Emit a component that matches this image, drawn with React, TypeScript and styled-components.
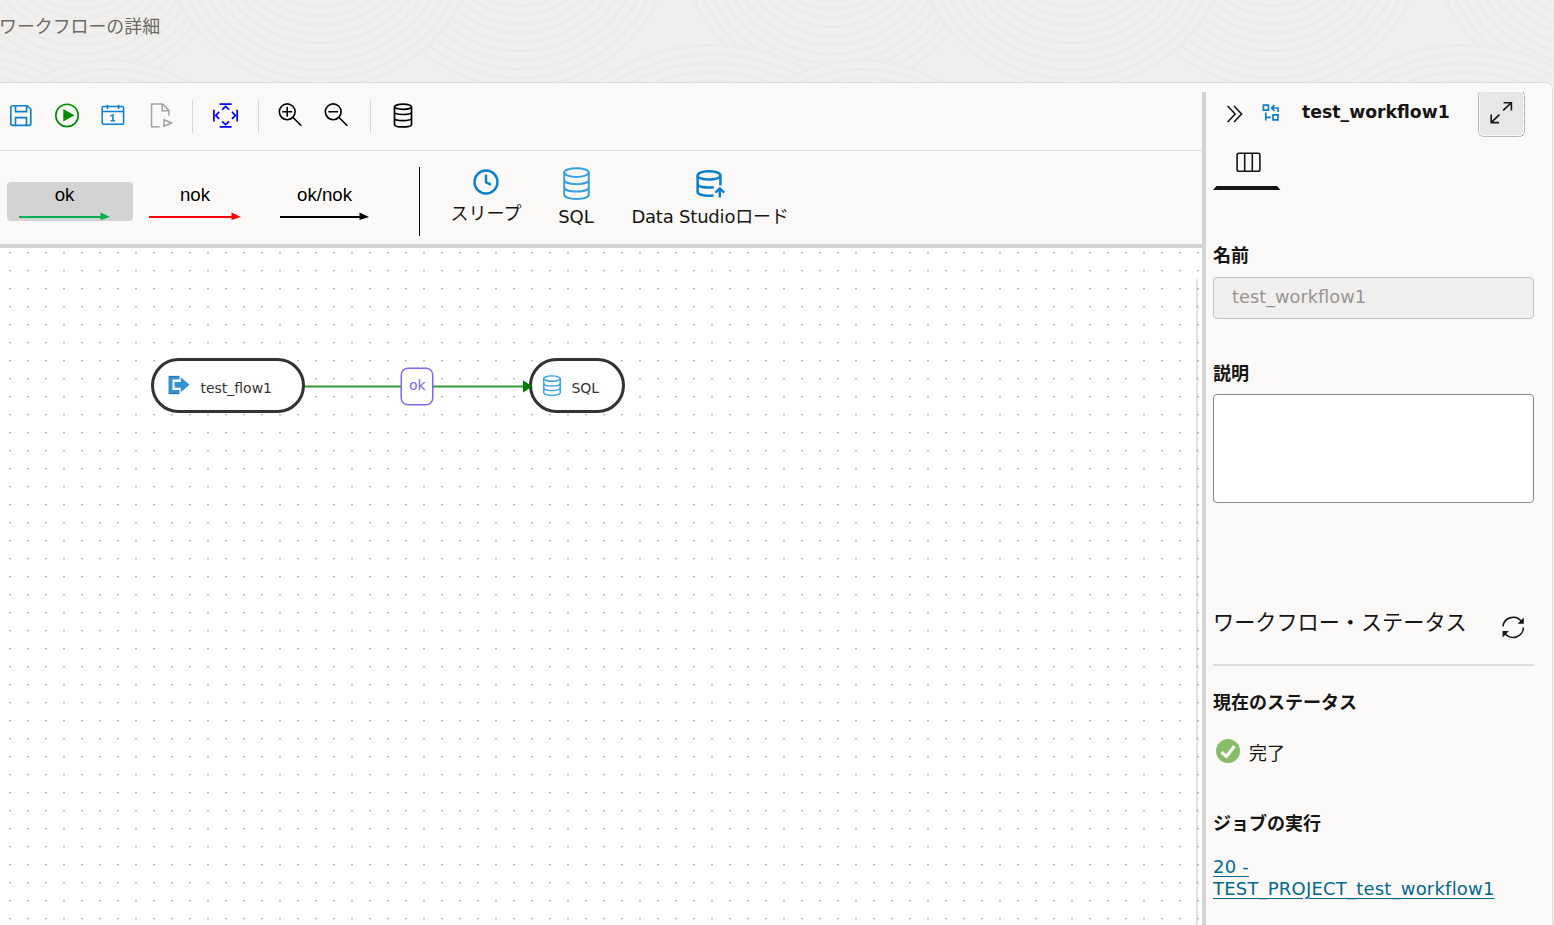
import React from 'react';
import styled, { createGlobalStyle } from 'styled-components';

const LATIN = `'DejaVu Sans', 'Noto Sans CJK JP', sans-serif`;

const GlobalStyle = createGlobalStyle`
  * { box-sizing: border-box; }
  body {
    margin: 0;
    background: #f0efed;
    color: #161513;
    font-family: 'Noto Sans', 'Noto Sans CJK JP', sans-serif;
    font-size: 18px;
    overflow: hidden;
  }
  svg { display: block; flex: none; }
`;

const Page = styled.div`
  display: flex;
  flex-direction: column;
  width: 1554px;
  height: 925px;
  overflow: hidden;
`;

const Header = styled.header`
  display: grid;
  height: 82px;
  flex: none;
  overflow: hidden;
  & > * { grid-area: 1 / 1; }
`;

const PageTitle = styled.h1`
  margin: 12px 0 0 -1px;
  font-size: 17.9px;
  font-weight: 400;
  line-height: 28px;
  color: #6b6865;
`;

const Card = styled.main`
  display: flex;
  flex: 1;
  width: 1553px;
  min-height: 0;
  background: #fbf9f8;
  border: solid #dedddb;
  border-width: 1px 1px 0 0;
  border-top-right-radius: 7px;
`;

const Editor = styled.section`
  display: flex;
  flex-direction: column;
  width: 1202px;
`;

const Toolbar = styled.div`
  display: flex;
  align-items: flex-start;
  height: 68px;
  padding-top: 20px;
  border-bottom: 1px solid #dddcda;
`;

const ToolButton = styled.button<{ $before: number; $color: string }>`
  flex: none;
  padding: 0;
  border: 0;
  background: none;
  margin-left: ${p => p.$before}px;
  color: ${p => p.$color};
`;

const Separator = styled.span<{ $before: number }>`
  width: 1px;
  height: 33px;
  margin: -3px 0 0 ${p => p.$before}px;
  background: #d9d8d6;
`;

const Palette = styled.div`
  display: flex;
  align-items: flex-start;
  height: 97px;
  border-bottom: 4px solid #d3d3d3;
`;

const LinkTypes = styled.div`
  display: flex;
  gap: 4px;
  padding: 31px 0 0 7px;
  width: 419px;
`;

const LinkType = styled.button<{ $active?: boolean; $pad: number; $w: number }>`
  display: flex;
  flex-direction: column;
  width: 126px;
  height: 39px;
  padding: 2px 0 0 ${p => p.$pad}px;
  border: 0;
  border-radius: 4px;
  background: ${p => (p.$active ? '#d3d3d3' : 'transparent')};
  color: #000;
  font: 18.67px/22px 'Liberation Sans', sans-serif;
  & > span { width: ${p => p.$w}px; text-align: center; }
  & > svg { margin-top: 6px; }
`;

const PaletteRule = styled.span`
  width: 1px;
  height: 69px;
  margin-top: 16px;
  background: #000;
`;

const Tasks = styled.div`
  display: flex;
  padding-left: 29px;
`;

const Task = styled.button<{ $w: number; $before?: number; $top: number; $gap: number; $spacing?: number }>`
  display: flex;
  flex-direction: column;
  align-items: center;
  width: ${p => p.$w}px;
  margin-left: ${p => p.$before ?? 0}px;
  padding: ${p => p.$top}px 0 0;
  gap: ${p => p.$gap}px;
  border: 0;
  background: none;
  color: #161513;
  font: 18px/26px ${LATIN};
  white-space: nowrap;
  letter-spacing: ${p => p.$spacing ?? 0}px;
`;

const Canvas = styled.div`
  position: relative;
  flex: 1;
  overflow: hidden;
  background-color: #fff;
`;

const CanvasDrawing = styled.svg`
  width: 1202px;
  height: 677px;
`;

const CanvasEdgeBar = styled.span`
  position: absolute;
  left: 1196px;
  top: 31px;
  bottom: 0;
  width: 2px;
  background: rgba(160, 160, 160, 0.32);
`;

const Node = styled.div<{ $x: number; $w: number; $pad: number }>`
  position: absolute;
  left: ${p => p.$x}px;
  top: 110.4px;
  display: flex;
  align-items: center;
  gap: 10px;
  width: ${p => p.$w}px;
  height: 55px;
  padding-left: ${p => p.$pad}px;
  border: 3px solid #333;
  border-radius: 28px;
  background: #fff;
  color: #333;
  font-family: ${LATIN};
  font-size: 14px;
  & > span { padding-top: 4px; }
  & > svg { margin-top: -1px; }
`;

const EdgeLabel = styled.div`
  position: absolute;
  left: 401.4px;
  top: 120px;
  width: 32px;
  height: 37px;
  border: 1px solid #7b68ee;
  box-shadow: 0 0 0 0.5px #7b68ee;
  border-radius: 7px;
  background: #fff;
  color: #7b68ee;
  font-family: ${LATIN};
  font-size: 14px;
  line-height: 33px;
  text-align: center;
`;

const EdgeHead = styled.svg`
  position: absolute;
  left: 523px;
  top: 132px;
`;

const Splitter = styled.div`
  width: 4px;
  margin-top: 9px;
  background: #d3d3d3;
`;

const Panel = styled.aside`
  display: flex;
  flex-direction: column;
  width: 328px;
  padding: 9px 0 0 7px;
`;

const PanelHead = styled.div`
  display: flex;
  height: 51px;
`;

const PanelTitle = styled.h2`
  width: 178px;
  margin: 7px 0 0 23px;
  font-family: ${LATIN};
  font-size: 17.3px;
  line-height: 26px;
  font-weight: 700;
`;

const IconSlot = styled.span<{ $left: number; $top: number }>`
  padding: ${p => p.$top}px 0 0 ${p => p.$left}px;
`;

const ExpandButton = styled.button`
  display: grid;
  place-items: center;
  flex: none;
  width: 43px;
  height: 43px;
  padding: 0 0 2px;
  border: 0;
  border-radius: 4px;
  background: #e8e7e5;
  outline: 1px dotted #777;
  outline-offset: 1px;
  clip-path: inset(0 -4px -4px -4px);
`;

const Tab = styled.div`
  width: 68px;
  height: 47px;
  padding: 9px 0 0 23px;
  & > svg + svg { margin: 14px 0 0 -23px; }
`;

const Label = styled.h3<{ $before: number }>`
  margin: ${p => p.$before}px 0 0;
  font-size: 18px;
  font-weight: 700;
  line-height: 26px;
`;

const NameInput = styled.div`
  width: 321px;
  height: 42px;
  margin-top: 9px;
  padding-left: 18px;
  border: 1px solid #c4c3c1;
  border-radius: 4px;
  background: #f1efee;
  color: #979593;
  font-family: ${LATIN};
  font-size: 17.8px;
  line-height: 38px;
`;

const Description = styled.textarea`
  display: block;
  width: 321px;
  height: 109px;
  margin: 8px 0 0;
  border: 1px solid #8b8987;
  border-radius: 4px;
  background: #fff;
  resize: none;
`;

const StatusHead = styled.div`
  display: flex;
  justify-content: space-between;
  width: 321px;
  height: 60px;
  margin-top: 103px;
  padding-right: 9px;
  border-bottom: 2px solid #dcdbd9;
  & > svg { margin-top: 10px; }
`;

const SectionTitle = styled.h2`
  margin: 0;
  font-size: 21.15px;
  font-weight: 400;
  line-height: 32px;
`;

const StatusRow = styled.div`
  display: flex;
  align-items: center;
  gap: 9px;
  height: 26px;
  margin-top: 23px;
  padding-left: 3px;
  & > span { padding-top: 2px; }
`;

const JobLink = styled.a`
  width: 321px;
  margin-top: 20px;
  color: #00688c;
  font-family: ${LATIN};
  line-height: 22px;
  text-decoration: underline;
  text-underline-offset: 3px;
  letter-spacing: 0.2px;
`;

const rings = (cx: number, cy: number, max: number) => (
  <g key={`${cx}/${cy}`}>
    <circle cx={cx} cy={cy} r={max} fill="#f0efed" />
    {Array.from({ length: Math.floor(max / 9) }, (_, i) => (
      <circle key={i} cx={cx} cy={cy} r={max - i * 9} fill="none" stroke="#ecebe9" strokeWidth="3" />
    ))}
  </g>
);

const WAVE_PERIOD = 752;

const Waves = () => (
  <svg width="1554" height="82">
    {[-1, 0, 1, 2].map(n => (
      <g key={n} transform={`translate(${n * WAVE_PERIOD} 0)`}>
        {rings(80, -60, 150)}
        {rings(-40, 240, 195)}
        {rings(110, 210, 150)}
        {rings(520, -65, 152)}
        {rings(320, -70, 158)}
      </g>
    ))}
  </svg>
);

const SaveIcon = () => (
  <svg width="24" height="24" fill="none" stroke="currentColor" strokeWidth="1.6">
    <path d="M3.5 2.8H18.3L21.8 6.3V20.5Q21.8 22.4 20 22.4H3.7Q1.8 22.4 1.8 20.5V4.6Q1.8 2.8 3.7 2.8Z" />
    <path d="M6.5 3V8.6H17.5V3M6.5 22V14.6H17.5V22" />
  </svg>
);

const RunIcon = () => (
  <svg width="24" height="25" fill="none" stroke="currentColor" strokeWidth="1.6">
    <circle cx="12" cy="12.4" r="11.2" />
    <path d="M8.3 6L19.4 12.2L8.3 18.6Z" fill="currentColor" stroke="none" />
  </svg>
);

const ScheduleIcon = () => (
  <svg width="24" height="24" fill="none" stroke="currentColor" strokeWidth="1.5">
    <rect x="1.2" y="3.4" width="21.4" height="17.8" rx="1.2" />
    <path d="M1 8.5H23M6.4 1.8V6M17.6 1.8V6" />
    <path d="M9.4 13.1L11.9 11.9V18.2M9.6 17.8H14" strokeWidth="1.5" />
  </svg>
);

const LogIcon = () => (
  <svg width="24" height="25" fill="none" stroke="currentColor" strokeWidth="1.5">
    <path d="M10.8 23.8H2.5V1H13.6L19.9 7.3V12.7M13.2 1V7.7H20" />
    <path d="M15 16.8L22.4 20L15 23.2Z" />
  </svg>
);

const FitIcon = () => (
  <svg width="26" height="25" fill="none" stroke="currentColor" strokeWidth="1.7">
    <path d="M6.6 1.1H18.6M6.6 23.8H18.6M0.9 6.8V18.4M24.2 6.8V18.4" />
    <path d="M9.1 6.6L12.6 3.3L16.1 6.6M9.1 18.4L12.6 21.7L16.1 18.4M6.2 8.9L2.8 12.4L6.2 15.9M19 8.9L22.4 12.4L19 15.9" />
  </svg>
);

const ZoomIcon = ({ plus }: { plus?: boolean }) => (
  <svg width="24" height="24" fill="none" stroke="currentColor" strokeWidth="1.6">
    <circle cx="9.2" cy="8.8" r="7.9" />
    <path d="M14.8 14.3L23.3 22.7M4.2 8.8H14.2" />
    {plus && <path d="M9.2 3.8V13.8" />}
  </svg>
);

const CylinderIcon = ({ w, h, color, stroke }: { w: number; h: number; color: string; stroke: number }) => (
  <svg width={w} height={h} viewBox="0 0 27 33" preserveAspectRatio="none" fill="none" stroke={color} strokeWidth={stroke}>
    <ellipse cx="13.5" cy="5.6" rx="12.3" ry="4.3" />
    <path d="M1.2 5.6V27.6C1.2 33.4 25.8 33.4 25.8 27.6V5.6M1.2 12.8C1.2 18.6 25.8 18.6 25.8 12.8M1.2 20.2C1.2 26 25.8 26 25.8 20.2" />
  </svg>
);

const DatabaseIcon = () => (
  <svg width="24" height="25" fill="none" stroke="currentColor" strokeWidth="1.7">
    <ellipse cx="12" cy="3.7" rx="8.5" ry="2.6" />
    <path d="M3.5 3.7V21.4C3.5 24.8 20.5 24.8 20.5 21.4V3.7M3.5 9.3C3.5 12.2 20.5 12.2 20.5 9.3M3.5 15.3C3.5 18.4 20.5 18.4 20.5 15.3" />
  </svg>
);

const ClockIcon = () => (
  <svg width="26" height="26" fill="none" stroke="#0a7fcb" strokeWidth="2.4">
    <circle cx="13" cy="13" r="11.5" />
    <path d="M13 5.6V13.2L18 15.8" />
  </svg>
);

const LoadIcon = () => (
  <svg width="30" height="28" fill="none" stroke="#0a7fcb" strokeWidth="2.5">
    <ellipse cx="14" cy="5.4" rx="11.4" ry="4.2" />
    <path d="M2.6 5.4V22C2.6 24.8 9 26.2 18.5 25.5M25.4 5.4V15.6M2.6 13.8C2.6 17 10 18.2 18.8 17.2" />
    <path d="M24.8 27.6V19M20.4 22.6L24.8 18.4L29.2 22.6" />
  </svg>
);

const Arrow = ({ w, color }: { w: number; color: string }) => (
  <svg width={w} height="9" fill={color}>
    <rect y="4" width={w - 8} height="2" />
    <path d={`M${w - 9.5} 0.4L${w} 5L${w - 9.5} 8Z`} />
  </svg>
);

const StartIcon = () => (
  <svg width="22" height="20" fill="#3492d4">
    <path d="M0.5 1H11.5V4.5H4.5V15H11.5V19H0.5Z" />
    <path d="M6.5 7H12.8V2.2L21.5 9.8L12.8 17.2V12.8H6.5Z" />
    <path d="M1 1.3H11.2M1 18.7H11.2" stroke="#20699f" strokeWidth="0.7" />
  </svg>
);

const CollapseIcon = () => (
  <svg width="17" height="18" fill="none" stroke="#161513" strokeWidth="1.6">
    <path d="M0.6 1L8.2 9L0.6 17M7 1L14.6 9L7 17" />
  </svg>
);

const WorkflowIcon = () => (
  <svg width="17" height="17" fill="none" stroke="#0a7fcb" strokeWidth="1.7">
    <path d="M1.4 1.2H6.4V6.2H1.4ZM11 10.8H16V15.8H11Z" />
    <path d="M16 8V4H9.9M12.4 1.2L9.6 4L12.4 6.8M3.8 8.5V16.4M3.8 13.3H8.8" />
  </svg>
);

const ExpandIcon = () => (
  <svg width="23" height="22" fill="none" stroke="#161513" strokeWidth="1.6">
    <path d="M13.2 8.4L21.2 0.8M13.6 0.8H21.4V8.4M9.4 12.6L1.4 20.4M1.2 12.6V20.6H9" />
  </svg>
);

const ColumnsIcon = () => (
  <svg width="26" height="20" fill="none" stroke="#161513" strokeWidth="1.6">
    <rect x="1.1" y="1.2" width="22.8" height="18" rx="1.8" />
    <path d="M8.7 1.2V19.2M16.3 1.2V19.2" />
  </svg>
);

const RefreshIcon = () => (
  <svg width="23" height="23" fill="none" stroke="#161513" strokeWidth="1.6">
    <path d="M1 10.5A10.2 10.2 0 0 1 19.8 6.2M21.4 11.5A10.2 10.2 0 0 1 2.6 16.8" />
    <path d="M21.8 1.6V7.8H15.6ZM0.6 21.4V15.1H6.9Z" fill="#161513" stroke="none" />
  </svg>
);

const DoneIcon = () => (
  <svg width="24" height="24">
    <circle cx="12" cy="12" r="12" fill="#87bd66" />
    <path d="M5.6 13.1L10.4 17.4L18.4 7.2" fill="none" stroke="#fff" strokeWidth="3.2" />
  </svg>
);

export default function App() {
  return (
    <Page>
      <GlobalStyle />
      <Header>
        <Waves />
        <PageTitle>ワークフローの詳細</PageTitle>
      </Header>
      <Card>
        <Editor>
          <Toolbar>
            <ToolButton $before={9} $color="#0a7fcb"><SaveIcon /></ToolButton>
            <ToolButton $before={22} $color="#008a00"><RunIcon /></ToolButton>
            <ToolButton $before={22} $color="#0a7fcb"><ScheduleIcon /></ToolButton>
            <ToolButton $before={24} $color="#a3a2a0"><LogIcon /></ToolButton>
            <Separator $before={19} />
            <ToolButton $before={20} $color="#0000ff"><FitIcon /></ToolButton>
            <Separator $before={19} />
            <ToolButton $before={19} $color="#000"><ZoomIcon plus /></ToolButton>
            <ToolButton $before={22} $color="#000"><ZoomIcon /></ToolButton>
            <Separator $before={22} />
            <ToolButton $before={20} $color="#000"><DatabaseIcon /></ToolButton>
          </Toolbar>
          <Palette>
            <LinkTypes>
              <LinkType $active $pad={12} $w={91}><span>ok</span><Arrow w={91} color="#00b050" /></LinkType>
              <LinkType $pad={12} $w={92}><span>nok</span><Arrow w={92} color="#ff0000" /></LinkType>
              <LinkType $pad={13} $w={89}><span>ok/nok</span><Arrow w={89} color="#000" /></LinkType>
            </LinkTypes>
            <PaletteRule />
            <Tasks>
              <Task $w={74} $top={18} $gap={6}><ClockIcon />スリープ</Task>
              <Task $w={40} $before={33} $top={16} $gap={4}><CylinderIcon w={27} h={33} color="#36a0e2" stroke={2} />SQL</Task>
              <Task $w={160} $before={34} $top={19} $gap={6} $spacing={-0.2}><LoadIcon />Data Studioロード</Task>
            </Tasks>
          </Palette>
          <Canvas>
            <CanvasDrawing>
              <defs>
                <pattern id="dots" width="18" height="18" patternUnits="userSpaceOnUse">
                  <rect x="9" y="4" width="2" height="1.4" fill="#b9b9b9" />
                </pattern>
              </defs>
              <rect width="1202" height="677" fill="url(#dots)" />
              <path d="M304 138.5H526" stroke="#339a33" strokeWidth="1.8" />
            </CanvasDrawing>
            <CanvasEdgeBar />
            <Node $x={151.4} $w={154} $pad={14}><StartIcon /><span>test_flow1</span></Node>
            <Node $x={529.4} $w={96} $pad={11}><CylinderIcon w={18} h={21} color="#36a0e2" stroke={2.2} /><span>SQL</span></Node>
            <EdgeLabel>ok</EdgeLabel>
            <EdgeHead width="10" height="13"><path d="M0 0.2L9.5 6.4L0 12.6Z" fill="#008000" /></EdgeHead>
          </Canvas>
        </Editor>
        <Splitter />
        <Panel>
          <PanelHead>
            <IconSlot $left={14} $top={13}><CollapseIcon /></IconSlot>
            <IconSlot $left={18} $top={12}><WorkflowIcon /></IconSlot>
            <PanelTitle>test_workflow1</PanelTitle>
            <ExpandButton><ExpandIcon /></ExpandButton>
          </PanelHead>
          <Tab>
            <ColumnsIcon />
            <svg width="68" height="4"><path d="M0 4L3.5 0H64L67.5 4Z" fill="#161513" /></svg>
          </Tab>
          <Label $before={52}>名前</Label>
          <NameInput>test_workflow1</NameInput>
          <Label $before={41}>説明</Label>
          <Description />
          <StatusHead>
            <SectionTitle>ワークフロー・ステータス</SectionTitle>
            <RefreshIcon />
          </StatusHead>
          <Label $before={23}>現在のステータス</Label>
          <StatusRow><DoneIcon /><span>完了</span></StatusRow>
          <Label $before={46}>ジョブの実行</Label>
          <JobLink>20 -<br />TEST_PROJECT_test_workflow1</JobLink>
        </Panel>
      </Card>
    </Page>
  );
}
